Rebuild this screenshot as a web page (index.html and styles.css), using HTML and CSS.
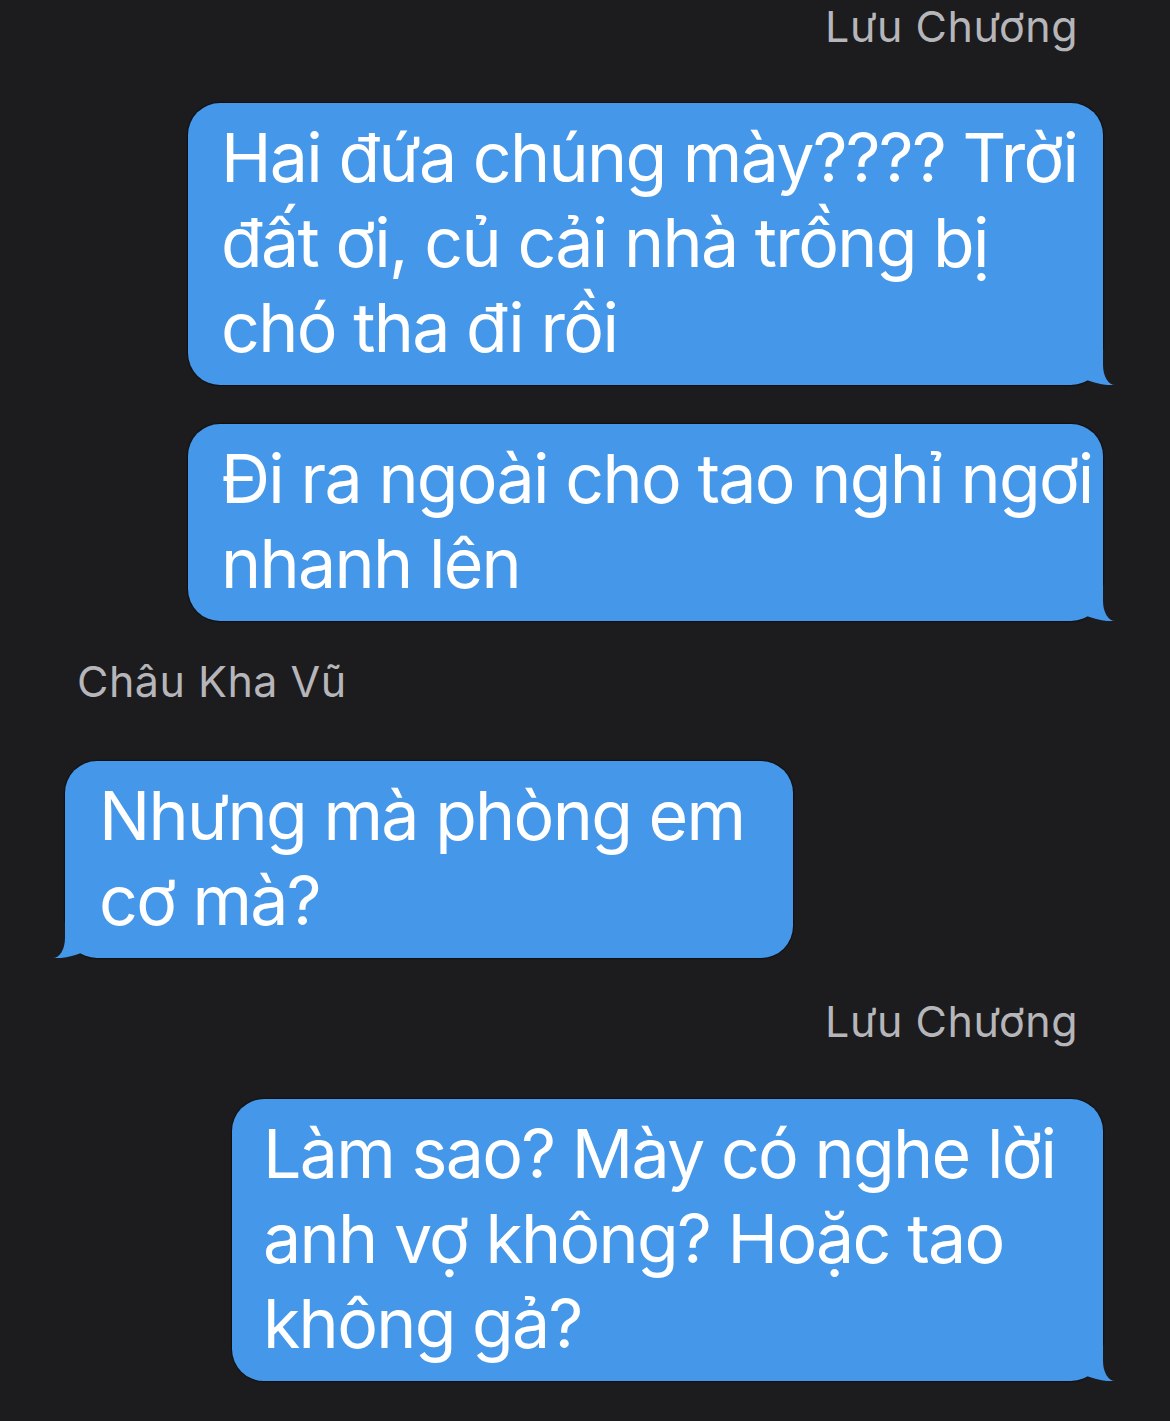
FILE: index.html
```html
<!DOCTYPE html>
<html lang="vi">
<head>
<meta charset="utf-8">
<title>Chat</title>
<link rel="stylesheet" href="styles.css">
</head>
<body>
<div class="chat">
  <div class="name name-out">Lưu Chương</div>
  <div class="bubble out w-wide gap-after-first">Hai đứa chúng mày???? Trời<br>đất ơi, củ cải nhà trồng bị<br>chó tha đi rồi</div>
  <div class="bubble out w-wide gap-same">Đi ra ngoài cho tao nghỉ ngơi<br>nhanh lên</div>
  <div class="name name-in gap-name">Châu Kha Vũ</div>
  <div class="bubble in w-mid gap-after-name">Nhưng mà phòng em<br>cơ mà?</div>
  <div class="name name-out gap-name2">Lưu Chương</div>
  <div class="bubble out w-big gap-after-name2">Làm sao? Mày có nghe lời<br>anh vợ không? Hoặc tao<br>không gả?</div>
</div>
</body>
</html>
```

FILE: styles.css
```css
html, body {
  margin: 0;
  padding: 0;
  background: #1c1c1e;
}
body {
  width: 1170px;
  height: 1421px;
  overflow: hidden;
  font-family: "Inter", "Liberation Sans", sans-serif;
}
.chat {
  display: flex;
  flex-direction: column;
  padding: 3px 67px 0 65px;
}
.name {
  font-size: 43px;
  line-height: 46px;
  color: #b6b6ba;
  letter-spacing: 0.5px;
}
.name-out {
  align-self: flex-end;
  padding-right: 25px;
}
.name-in {
  align-self: flex-start;
  padding-left: 12px;
}
.gap-name { margin-top: 37px; }
.gap-name2 { margin-top: 40px; }
.gap-after-first { margin-top: 54px; }
.gap-after-name { margin-top: 57px; }
.gap-after-name2 { margin-top: 55px; }
.gap-same { margin-top: 39px; }

.bubble {
  position: relative;
  box-sizing: border-box;
  background: #4597e9;
  color: #ffffff;
  font-size: 68px;
  line-height: 85px;
  letter-spacing: -1.7px;
  white-space: nowrap;
  padding: 12px 0 15px 33px;
  border-radius: 32px;
  box-shadow: 0 0 1px 1px rgba(0, 0, 0, 0.45);
}
.bubble.out { align-self: flex-end; }
.bubble.in { align-self: flex-start; padding-left: 34px; }
.w-wide { width: 915px; }
.w-mid { width: 728px; }
.w-big { width: 871px; padding-left: 31px; }

.bubble::before,
.bubble::after {
  content: "";
  position: absolute;
  bottom: 0;
  height: 36px;
}
.bubble.out::before {
  right: -14px;
  width: 34px;
  background: #4597e9;
  border-bottom-left-radius: 30px 11px;
}
.bubble.out::after {
  right: -30px;
  width: 30px;
  background: #1c1c1e;
  border-bottom-left-radius: 12px 20px;
}
.bubble.in::before {
  left: -14px;
  width: 34px;
  background: #4597e9;
  border-bottom-right-radius: 30px 11px;
}
.bubble.in::after {
  left: -30px;
  width: 30px;
  background: #1c1c1e;
  border-bottom-right-radius: 12px 20px;
}
```
